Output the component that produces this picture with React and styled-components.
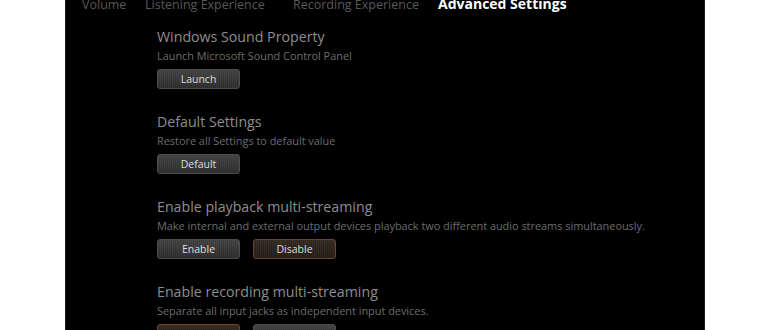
import React from 'react'
import styled, { createGlobalStyle } from 'styled-components'

const Global = createGlobalStyle`
  html, body {
    margin: 0;
    padding: 0;
    background: #ffffff;
    height: 100%;
    overflow: hidden;
  }
  #root { height: 100%; }
`

const Page = styled.div`
  height: 330px;
  display: flex;
  justify-content: center;
  background: #fff;
  font-family: 'Open Sans', 'Noto Sans', sans-serif;
`

const Panel = styled.div`
  width: 640px;
  height: 330px;
  background: #000;
  overflow: hidden;
  display: flex;
  flex-direction: column;
  border-left: 1px solid #1a1a1a;
  border-right: 1px solid #1a1a1a;
  box-sizing: border-box;
`

const TabBar = styled.div`
  display: flex;
  align-items: baseline;
  margin-top: -4px;
  padding-left: 16px;
  height: 16px;
`

const Tab = styled.div`
  width: ${p => p.$w ? p.$w + 'px' : 'auto'};
  font-size: ${p => p.$active ? '14px' : '12.5px'};
  line-height: 16px;
  white-space: nowrap;
  color: ${p => p.$active ? '#ffffff' : '#585858'};
  font-weight: ${p => p.$active ? 700 : 400};
`

const Content = styled.div`
  display: flex;
  flex-direction: column;
  gap: 24px;
  padding: 16px 0 0 91px;
`

const Section = styled.div`
  display: flex;
  flex-direction: column;
`

const Title = styled.div`
  font-size: 14.2px;
  line-height: 18px;
  color: #8e8e8e;
  white-space: nowrap;
`

const Desc = styled.div`
  margin-top: 3px;
  font-size: 10.9px;
  line-height: 14px;
  color: #6c6c6c;
  white-space: nowrap;
`

const Buttons = styled.div`
  display: flex;
  gap: 13px;
  margin-top: 6px;
`

const Button = styled.div`
  width: 83px;
  height: 20px;
  box-sizing: border-box;
  border-radius: 3px;
  border: 1px solid ${p => p.$on ? '#6a4528' : '#4c4c4c'};
  background:
    repeating-linear-gradient(90deg, rgba(255,255,255,0.035) 0 1px, rgba(0,0,0,0.04) 1px 2px),
    ${p => p.$on
      ? 'linear-gradient(#33291f, #231b15)'
      : 'linear-gradient(#424242, #2c2c2c)'};
  display: flex;
  align-items: center;
  justify-content: center;
  font-size: 10.5px;
  color: #dcdcdc;
`

const sections = [
  {
    title: 'Windows Sound Property',
    desc: 'Launch Microsoft Sound Control Panel',
    buttons: [{ label: 'Launch' }],
  },
  {
    title: 'Default Settings',
    desc: 'Restore all Settings to default value',
    buttons: [{ label: 'Default' }],
  },
  {
    title: 'Enable playback multi-streaming',
    desc: 'Make internal and external output devices playback two different audio streams simultaneously.',
    buttons: [{ label: 'Enable' }, { label: 'Disable', on: true }],
  },
  {
    title: 'Enable recording multi-streaming',
    desc: 'Separate all input jacks as independent input devices.',
    buttons: [{ label: 'Enable', on: true }, { label: 'Disable' }],
  },
]

const App = () => {
  return (
    <Page>
      <Global />
      <Panel>
        <TabBar>
          <Tab $w={63}>Volume</Tab>
          <Tab $w={148}>Listening Experience</Tab>
          <Tab $w={145}>Recording Experience</Tab>
          <Tab $active>Advanced Settings</Tab>
        </TabBar>
        <Content>
          {sections.map(s => (
            <Section key={s.title}>
              <Title>{s.title}</Title>
              <Desc>{s.desc}</Desc>
              <Buttons>
                {s.buttons.map(b => (
                  <Button key={b.label} $on={b.on}>{b.label}</Button>
                ))}
              </Buttons>
            </Section>
          ))}
        </Content>
      </Panel>
    </Page>
  )
}

export default App
